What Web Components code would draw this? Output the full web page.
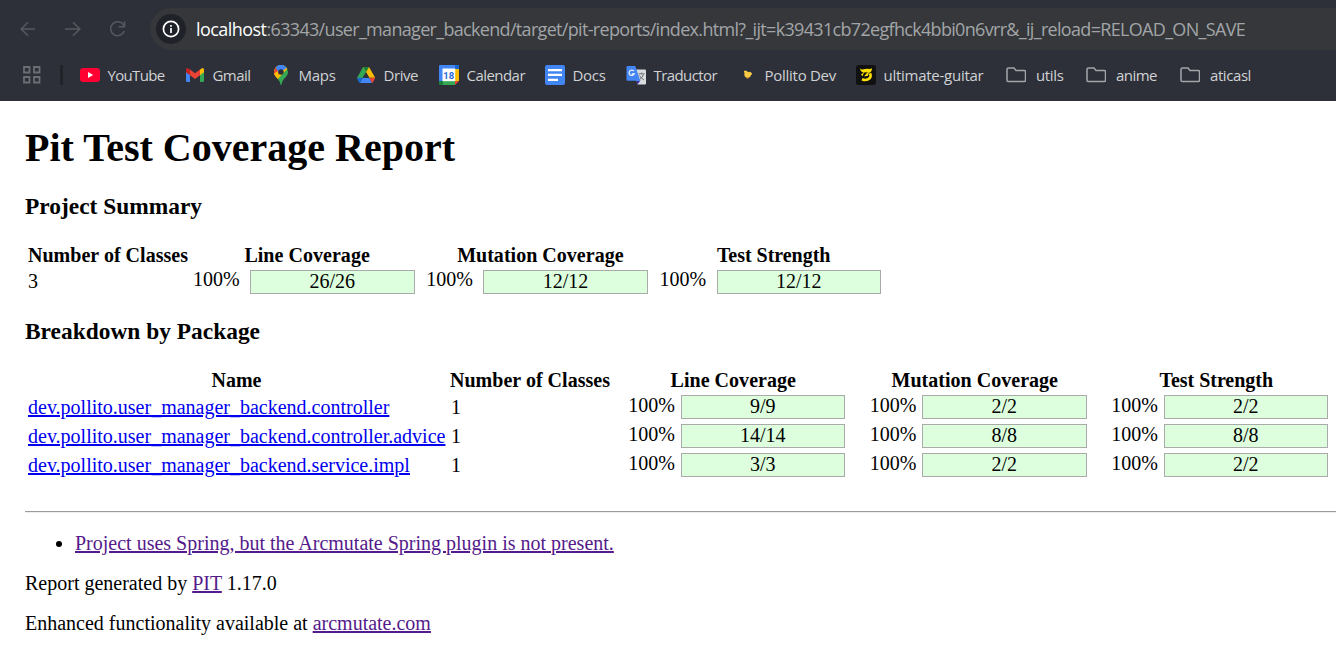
<!DOCTYPE html>
<html lang="en">
<head>
<meta charset="utf-8">
<title>Pit Test Coverage Report</title>
<style>
  html, body { margin: 0; background: #fff; overflow: hidden; }
  body { width: 1336px; height: 652px; }
</style>
</head>
<body>
<app-page></app-page>
<script>
const define = (name, html, init) => {
  const tpl = document.createElement('template');
  tpl.innerHTML = html;
  customElements.define(name, class extends HTMLElement {
    connectedCallback() {
      if (this.shadowRoot) return;
      const root = this.attachShadow({ mode: 'open' });
      root.append(tpl.content.cloneNode(true));
      if (init) init(this, root);
    }
  });
};

// Inline text whose tracking is adjusted to fill the width in "w".
define('fit-text', `<style>:host{display:inline;white-space:nowrap}</style><span><slot></slot></span>`, (host, root) => {
  const span = root.querySelector('span');
  const n = host.textContent.length;
  const w = parseFloat(host.getAttribute('w'));
  span.style.letterSpacing = ((w - span.getBoundingClientRect().width) / n) + 'px';
});

const icons = {
  youtube: `<rect y="3" width="20" height="14" rx="3.2" fill="#f03"/><path d="M8 7l5.2 3L8 13z" fill="#fff"/>`,
  gmail: `<path d="M1 6v9.5Q1 17 2.500 17H5V9z" fill="#4285f4"/><path d="M15 9v8h2.500Q19 17 19 15.500V6z" fill="#34a853"/><path d="M15 4.500L17 3.200Q19 2.600 19 5v2.200L15 10.200z" fill="#fbbc04"/><path d="M5 4.500L3 3.200Q1 2.600 1 5v2.200L5 10.200z" fill="#c5221f"/><path d="M5 4.500l5 3.800 5-3.800v5.700l-5 3.800-5-3.800z" fill="#ea4335"/>`,
  maps: `<clipPath id="p"><path d="M10 0a7 7 0 0 0-7 7c0 5 5.500 6 6.400 12.300.2.900 1 .9 1.200 0C11.500 13 17 12 17 7a7 7 0 0 0-7-7z"/></clipPath><g clip-path="url(#p)"><path d="M0 0h20v20H0z" fill="#34a853"/><path d="M0 5L6 0h14L5 16 0 20z" fill="#fbbc04"/><path d="M8 8L20 0H4z" fill="#4285f4"/><path d="M1 2l4-1 5 6-5 5-4-3z" fill="#ea4335"/><path d="M4.500 2.500L9-1h8L7.500 7z" fill="#4285f4"/><path d="M2 9l5-3 1 6-3 4z" fill="#fbbc04"/></g><circle cx="10" cy="7" r="2.700" fill="#292e39"/>`,
  drive: `<path d="M7 2h6l-3 5.500-6.500 10L1 13z" fill="#34a853"/><path d="M7 2h6l6.200 10.700h-6z" fill="#fbbc04"/><path d="M7 2h6l-3 5.200z" fill="#188038"/><path d="M1 12.700h5.800L4 17.800Q3 17.500 2.500 16.500z" fill="#1967d2"/><path d="M6.800 12.700h6.500l2.700 5.200H4z" fill="#4285f4"/><path d="M13.300 12.700h5.900l-2 4.300-1.200.9z" fill="#ea4335"/><path d="M10 7.200l3.100 5.500H6.900z" fill="#2d3039"/>`,
  calendar: `<path d="M1 0h18q1 0 1 1v4H0V1q0-1 1-1z" fill="#4285f4"/><path d="M0 4h4v12H0z" fill="#4285f4"/><path d="M16 0h3q1 0 1 1v3h-4z" fill="#1967d2"/><path d="M16 4h4v12h-4z" fill="#fbbc04"/><path d="M0 16h4v4H1q-1 0-1-1z" fill="#188038"/><path d="M4 16h12v4H4z" fill="#34a853"/><path d="M16 16h4l-4 4z" fill="#ea4335"/><path d="M3.500 3.500h12.700v12.700H3.500z" fill="#fff"/><text x="9.800" y="13.500" text-anchor="middle" font-family="Roboto" font-size="9.500" font-weight="700" fill="#2a6bdb">18</text>`,
  docs: `<rect width="20" height="20" rx="2" fill="#4285f4"/><path d="M3 4h14v2.200H3zM3 8.800h14V11H3zM3 13.700h10V16H3z" fill="#fff"/>`,
  translate: `<path d="M8 4.500h11q1 0 1 1v13q0 1-1 1h-7.500z" fill="#dadce0"/><path d="M10.500 15.500h4l-3 4z" fill="#3730a3"/><path d="M12.500 8.800h6M15.500 7.500v1.300M17.500 9q-1 4-4 5.600M13.500 10.500q1.500 3 4.500 4.500" stroke="#70757a" fill="none"/><path d="M1.500 1H9.300l5 14.700H1.500q-1 0-1-1V2q0-1 1-1z" fill="#4285f4"/><path d="M8 6.200A2.700 2.700 0 1 0 8.200 9H5.800" stroke="#e8efff" stroke-width="1.300" fill="none"/>`,
  chick: `<path d="M6.800 6.300q1.700-1.600 3.500.2l1.200.8q1.200-1.300 2.600.2l1.200 1.500-1.300 1q-.3 2.700-3 2.900-3 0-3.700-2.900l.2-1.700z" fill="#fccb45"/><path d="M9.200 12.500l2.800.2-.8 1.100H9.800z" fill="#c96a2a"/>`,
  guitar: `<rect width="20" height="20" rx="2.500" fill="#111"/><path d="M4 3.600q1.600 1.300 3.500.7 3.300-1 6.300-.2 1.200-.1 1.800-1.300.9 2.800-.8 4.300l-2 .8q-3-1.400-5.200-.2Q4.500 7 4 3.600z" fill="#fde000"/><path d="M14 8.300q1.400 3-.4 5-3 2.800-7.600.9" fill="none" stroke="#fde000" stroke-width="2.600"/><path d="M5 9.500l3-2.200-1.500 4z" fill="#fde000"/><path d="M8.200 11.200l2.900-3.400 1.700.4-1.200 2.900z" fill="#fde000"/>`,
  folder: `<path d="M2.500 3H8l2 2.500h8.300q1.200 0 1.200 1.200v8.600q0 1.200-1.200 1.200H2.200Q1 16.500 1 15.300V4.500Q1 3 2.500 3z" fill="none" stroke="#a3a5a8" stroke-width="1.500"/>`
};

define('bookmark-item', `<style>
  :host{display:flex;align-items:center;flex:none;gap:7.5px;font:15px/20px "Open Sans","Noto Sans",sans-serif;color:#d0d2d4}
  svg{width:20px;height:20px;display:block;flex:none}
</style><svg viewBox="0 0 20 20"></svg><slot></slot>`, (host, root) => {
  root.querySelector('svg').innerHTML = icons[host.getAttribute('icon')];
  host.style.width = host.getAttribute('span') + 'px';
  if (host.getAttribute('icon') === 'folder') host.style.gap = '10px';
});

define('address-bar', `<style>
  :host{display:flex;height:42px;margin:8px 0 0;align-items:center}
  nav{display:flex;width:150px;box-sizing:border-box;padding-left:18px;gap:25px}
  nav svg{width:20px;height:20px;fill:none;stroke:#55585d;stroke-width:1.600}
  .field{display:flex;flex:1;align-items:center;height:42px;border-radius:21px 0 0 21px;background:#35373a;box-sizing:border-box;padding-left:6px;font:18px/24px "Open Sans","Noto Sans",sans-serif;color:#a2a5a8}
  .info{width:30px;height:30px;border-radius:50%;background:#202229;display:grid;place-items:center;margin-right:10px}
  b{font-weight:400;color:#fff}
</style>
<nav>
  <svg viewBox="0 0 20 20"><path d="M17 10H3.500M10 3.200L3.200 10l6.800 6.800"/></svg>
  <svg viewBox="0 0 20 20"><path d="M2 10h14.500M10 3.200l6.800 6.800-6.800 6.800"/></svg>
  <svg viewBox="0 0 20 20"><path d="M15.800 6.300A7 7 0 1 0 16.300 12M16.500 2.500v5.300h-6"/></svg>
</nav>
<div class="field">
  <div class="info"><svg width="18" height="18" viewBox="0 0 18 18"><circle cx="9" cy="9" r="7.600" fill="none" stroke="#fff" stroke-width="1.700"/><path d="M9 8v5M9 5v1.700" stroke="#fff" stroke-width="1.700"/></svg></div>
  <b><fit-text w="70.500">localhost</fit-text></b><fit-text w="978.500">:63343/user_manager_backend/target/pit-reports/index.html?_ijt=k39431cb72egfhck4bbi0n6vrr&amp;_ij_reload=RELOAD_ON_SAVE</fit-text>
</div>`);

define('bookmarks-bar', `<style>
  :host{display:flex;align-items:center;height:50px}
  .apps{width:20px;height:20px;margin-left:22px}
  i{width:3px;height:20px;border-radius:1px;background:#212329;margin:0 17px 0 18px}
</style>
<svg class="apps" viewBox="0 0 20 20" fill="none" stroke="#6b6e73" stroke-width="1.800"><path d="M2 2h5.500v5.500H2zM12 2h5.500v5.500H12zM2 12h5.500v5.500H2zM12 12h5.500v5.500H12z"/></svg><i></i>
<bookmark-item icon="youtube" span="105"><fit-text w="57">YouTube</fit-text></bookmark-item>
<bookmark-item icon="gmail" span="86"><fit-text w="38">Gmail</fit-text></bookmark-item>
<bookmark-item icon="maps" span="85"><fit-text w="37">Maps</fit-text></bookmark-item>
<bookmark-item icon="drive" span="83"><fit-text w="34.500">Drive</fit-text></bookmark-item>
<bookmark-item icon="calendar" span="106"><fit-text w="58.500">Calendar</fit-text></bookmark-item>
<bookmark-item icon="docs" span="81"><fit-text w="33">Docs</fit-text></bookmark-item>
<bookmark-item icon="translate" span="111"><fit-text w="63.500">Traductor</fit-text></bookmark-item>
<bookmark-item icon="chick" span="119"><fit-text w="71.500">Pollito Dev</fit-text></bookmark-item>
<bookmark-item icon="guitar" span="150"><fit-text w="100">ultimate-guitar</fit-text></bookmark-item>
<bookmark-item icon="folder" span="80"><fit-text w="27.500">utils</fit-text></bookmark-item>
<bookmark-item icon="folder" span="94"><fit-text w="41">anime</fit-text></bookmark-item>
<bookmark-item icon="folder" span="80"><fit-text w="41">aticasl</fit-text></bookmark-item>`);

define('coverage-cell', `<style>
  :host{display:flex;box-sizing:border-box;padding-left:var(--inset);align-items:flex-start}
  span{width:var(--pct);flex:none;margin-top:var(--lift)}
  div{box-sizing:border-box;width:164.5px;height:24px;border:1px solid #aaa;background:#dfd;text-align:center;line-height:20px}
</style><span>100%</span><div><slot></slot></div>`);

define('report-table', `<style>
  :host{display:grid;font:20px/22px "Liberation Serif","Times New Roman",serif}
  ::slotted(b){text-align:center}
  ::slotted(b.start){text-align:left;padding-left:3px}
  ::slotted(b.near){padding-left:2px}
</style><slot></slot>`, host => { host.style.gridTemplateColumns = host.getAttribute('columns'); });

define('report-link', `<style>
  :host{display:inline}
  a{color:var(--link,#551a8b);text-decoration:underline;text-decoration-thickness:2px}
</style><a href="#"><slot></slot></a>`);

define('coverage-report', `<style>
  :host{display:block;padding:24px 0 0 25px;font:20px/22px "Liberation Serif","Times New Roman",serif;color:#000}
  h1{margin:0 0 22px;font-size:40px;line-height:46px}
  h3{margin:0 0 25px;font-size:23.4px;line-height:26px}
  .summary{--inset:2.500px;--pct:57.050px;--lift:-2px;grid-template-rows:26px 24px;margin-bottom:24px}
  .packages{--inset:15.800px;--pct:52.250px;--lift:-1px;--link:#0000ee;grid-template-rows:26px repeat(3,29px);margin-bottom:29px}
  .cell{padding:1px 0 0 3px;white-space:nowrap}
  .flat{padding-top:0}
  hr{margin:0;border:0;border-top:1px solid #9a9a9a;border-bottom:1px solid #eee;height:0}
  ul{margin:19px 0 18px;padding-left:50px}
  p{margin:0 0 18px}
</style>
<h1><fit-text w="430">Pit Test Coverage Report</fit-text></h1>
<h3><fit-text w="177">Project Summary</fit-text></h3>
<report-table class="summary" columns="165.5px repeat(3,233.25px)">
  <b class="start"><fit-text w="160">Number of Classes</fit-text></b><b><fit-text w="125.500">Line Coverage</fit-text></b><b><fit-text w="166.500">Mutation Coverage</fit-text></b><b><fit-text w="113.500">Test Strength</fit-text></b>
  <div class="cell flat">3</div><coverage-cell>26/26</coverage-cell><coverage-cell>12/12</coverage-cell><coverage-cell>12/12</coverage-cell>
</report-table>
<h3><fit-text w="235">Breakdown by Package</fit-text></h3>
<report-table class="packages" columns="423px 164.5px repeat(3,241.5px)">
  <b><fit-text w="50">Name</fit-text></b><b class="start near"><fit-text w="160">Number of Classes</fit-text></b><b><fit-text w="125.500">Line Coverage</fit-text></b><b><fit-text w="166.500">Mutation Coverage</fit-text></b><b><fit-text w="113.500">Test Strength</fit-text></b>
  <div class="cell"><report-link>dev.pollito.user_manager_backend.controller</report-link></div><div class="cell">1</div><coverage-cell>9/9</coverage-cell><coverage-cell>2/2</coverage-cell><coverage-cell>2/2</coverage-cell>
  <div class="cell"><report-link>dev.pollito.user_manager_backend.controller.advice</report-link></div><div class="cell">1</div><coverage-cell>14/14</coverage-cell><coverage-cell>8/8</coverage-cell><coverage-cell>8/8</coverage-cell>
  <div class="cell"><report-link>dev.pollito.user_manager_backend.service.impl</report-link></div><div class="cell">1</div><coverage-cell>3/3</coverage-cell><coverage-cell>2/2</coverage-cell><coverage-cell>2/2</coverage-cell>
</report-table>
<hr>
<ul><li><report-link>Project uses Spring, but the Arcmutate Spring plugin is not present.</report-link></li></ul>
<p>Report generated by <report-link>PIT</report-link> 1.17.0</p>
<p>Enhanced functionality available at <report-link>arcmutate.com</report-link></p>`);

define('app-page', `<style>
  :host{display:block;width:1336px;height:652px;overflow:hidden}
  header{height:101px;background:#2d3039;display:flow-root}
</style>
<header><address-bar></address-bar><bookmarks-bar></bookmarks-bar></header>
<coverage-report></coverage-report>`);
</script>
</body>
</html>
